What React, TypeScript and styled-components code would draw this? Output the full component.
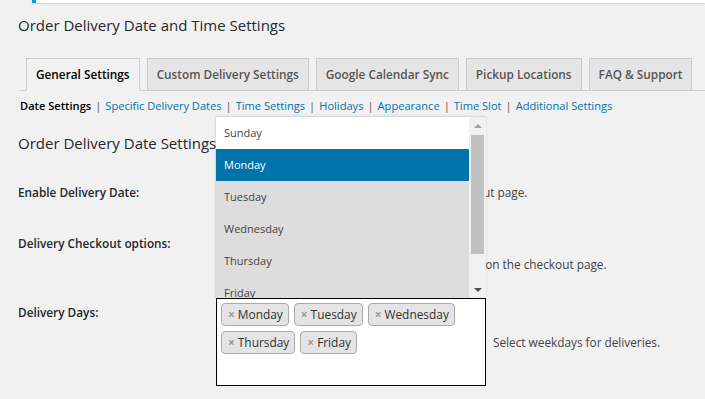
import React from 'react';
import styled, { createGlobalStyle } from 'styled-components';

const GlobalStyle = createGlobalStyle`
  html, body {
    margin: 0;
    padding: 0;
  }
  body {
    background: #f1f1f1;
    font-family: "Open Sans", "Liberation Sans", sans-serif;
    color: #23282d;
  }
  * {
    box-sizing: border-box;
  }
`;

const Page = styled.div`
  width: 705px;
  height: 399px;
  overflow: hidden;
  background: #f1f1f1;
`;

const Notice = styled.div`
  height: 3px;
  margin-left: 32px;
  background: #fff;
  border-left: 4px solid #00a0d2;
  box-shadow: 0 1px 2px rgba(0, 0, 0, 0.12);
`;

const Wrap = styled.div`
  padding-left: 18px;
`;

const Title = styled.h1`
  margin: 12px 0 0;
  font-size: 15px;
  font-weight: 400;
  line-height: 20px;
  color: #23282d;
`;

const TabBar = styled.nav`
  display: flex;
  gap: 7px;
  margin: 23px 0 0 2px;
  padding-left: 6px;
  border-bottom: 1px solid #ccc;
`;

const Tab = styled.a<{ $active?: boolean }>`
  display: block;
  height: 33px;
  margin-bottom: -1px;
  padding: 0 9px;
  line-height: 31px;
  border: 1px solid #ccc;
  border-bottom-color: ${({ $active }) => ($active ? '#f1f1f1' : '#ccc')};
  background: ${({ $active }) => ($active ? '#f1f1f1' : '#e5e5e5')};
  color: ${({ $active }) => ($active ? '#000' : '#555')};
  font-size: 11.8px;
  font-weight: 600;
  white-space: nowrap;
  text-decoration: none;
`;

const SubNav = styled.ul`
  display: flex;
  margin: 5px 0 0 2px;
  padding: 0;
  list-style: none;
  font-size: 11.1px;
  line-height: 20px;
  white-space: nowrap;
`;

const SubLink = styled.a<{ $current?: boolean }>`
  color: ${({ $current }) => ($current ? '#000' : '#0073aa')};
  font-weight: ${({ $current }) => ($current ? 600 : 400)};
  text-decoration: none;
`;

const Sep = styled.span`
  padding: 0 4px;
  color: #555;
`;

const Heading = styled.h2`
  margin: 17px 0 0;
  font-size: 15px;
  font-weight: 400;
  line-height: 20px;
  color: #23282d;
`;

const Row = styled.div<{ $gap: number }>`
  display: grid;
  grid-template-columns: 198px 1fr;
  margin-top: ${({ $gap }) => $gap}px;
`;

const Label = styled.div<{ $offset?: number }>`
  padding-top: ${({ $offset }) => $offset ?? 0}px;
  font-size: 11.8px;
  font-weight: 600;
  line-height: 18px;
  color: #23282d;
`;

const Field = styled.div`
  font-size: 11.8px;
  line-height: 18px;
  color: #444;
  white-space: nowrap;
`;

const CheckLine = styled.label`
  display: flex;
  align-items: center;
  gap: 12px;
`;

const Box = styled.span`
  width: 16px;
  height: 16px;
  border: 1px solid #b4b9be;
  background: #fff;
`;

const Radios = styled.div`
  display: flex;
  gap: 12px;
`;

const Description = styled.p`
  margin: 3px 0 0;
`;

const SelectRow = styled.div`
  display: flex;
  align-items: center;
  gap: 7px;
`;

const SelectBox = styled.div`
  position: relative;
  width: 270px;
  height: 88px;
  padding: 4px;
  display: flex;
  flex-wrap: wrap;
  align-content: flex-start;
  gap: 5px;
  background: #fff;
  border: 1px solid #000;
`;

const Chip = styled.span`
  height: 23px;
  padding: 0 5px 0 6px;
  line-height: 21px;
  font-size: 11.9px;
  color: #333;
  background: #e4e4e4;
  border: 1px solid #aaa;
  border-radius: 4px;
`;

const Remove = styled.span`
  margin-right: 3px;
  color: #999;
  font-weight: 700;
`;

const Dropdown = styled.div`
  position: absolute;
  left: -1px;
  bottom: calc(100% + 1px);
  width: 270px;
  height: 181px;
  display: flex;
  overflow: hidden;
  background: #fff;
  box-shadow: 0 -1px 2px rgba(0, 0, 0, 0.12), -1px 0 1px rgba(0, 0, 0, 0.06);
`;

const Options = styled.ul`
  flex: 1;
  margin: 0;
  padding: 0;
  list-style: none;
`;

const Option = styled.li<{ $state: 'plain' | 'picked' | 'hover' }>`
  height: 32px;
  padding-left: 8px;
  line-height: 32px;
  font-size: 11px;
  background: ${({ $state }) =>
    $state === 'hover' ? '#0073aa' : $state === 'picked' ? '#ddd' : '#fff'};
  color: ${({ $state }) => ($state === 'hover' ? '#fff' : '#444')};
`;

const Scrollbar = styled.div`
  width: 17px;
  display: flex;
  flex-direction: column;
  background: #f1f1f1;
`;

const Arrow = styled.div<{ $down?: boolean }>`
  height: 17px;
  display: flex;
  align-items: center;
  justify-content: center;

  &::before {
    content: '';
    border-left: 4px solid transparent;
    border-right: 4px solid transparent;
    ${({ $down }) =>
      $down ? 'border-top: 4px solid #505050;' : 'border-bottom: 4px solid #a3a3a3;'}
  }
`;

const Track = styled.div`
  flex: 1;
  padding: 1px 2px 0;
`;

const Thumb = styled.div`
  height: 119px;
  background: #c1c1c1;
`;

const days = ['Sunday', 'Monday', 'Tuesday', 'Wednesday', 'Thursday', 'Friday', 'Saturday'];
const picked = ['Monday', 'Tuesday', 'Wednesday', 'Thursday', 'Friday'];

const tabs = [
  'General Settings',
  'Custom Delivery Settings',
  'Google Calendar Sync',
  'Pickup Locations',
  'FAQ & Support',
];

const links = [
  'Date Settings',
  'Specific Delivery Dates',
  'Time Settings',
  'Holidays',
  'Appearance',
  'Time Slot',
  'Additional Settings',
];

export default function App() {
  return (
    <Page>
      <GlobalStyle />
      <Notice />
      <Wrap>
        <Title>Order Delivery Date and Time Settings</Title>

        <TabBar>
          {tabs.map((t, i) => (
            <Tab key={t} $active={i === 0}>
              {t}
            </Tab>
          ))}
        </TabBar>

        <SubNav>
          {links.map((l, i) => (
            <li key={l}>
              <SubLink $current={i === 0}>{l}</SubLink>
              {i < links.length - 1 && <Sep>|</Sep>}
            </li>
          ))}
        </SubNav>

        <Heading>Order Delivery Date Settings</Heading>

        <Row $gap={29.5}>
          <Label>Enable Delivery Date:</Label>
          <Field>
            <CheckLine>
              <Box />
              Enable Delivery Date capture on the checkout page.
            </CheckLine>
          </Field>
        </Row>

        <Row $gap={33.5}>
          <Label>Delivery Checkout options:</Label>
          <Field>
            <Radios>
              <span>Delivery Date</span>
              <span>Delivery Date &amp; Time</span>
            </Radios>
            <Description>
              Select what delivery options should be displayed on the checkout page.
            </Description>
          </Field>
        </Row>

        <Row $gap={25}>
          <Label $offset={4.5}>Delivery Days:</Label>
          <SelectRow>
            <SelectBox>
              <Dropdown>
                <Options>
                  {days.map((d) => (
                    <Option
                      key={d}
                      $state={d === 'Monday' ? 'hover' : picked.includes(d) ? 'picked' : 'plain'}
                    >
                      {d}
                    </Option>
                  ))}
                </Options>
                <Scrollbar>
                  <Arrow />
                  <Track>
                    <Thumb />
                  </Track>
                  <Arrow $down />
                </Scrollbar>
              </Dropdown>
              {picked.map((d) => (
                <Chip key={d}>
                  <Remove>×</Remove>
                  {d}
                </Chip>
              ))}
            </SelectBox>
            <Field>Select weekdays for deliveries.</Field>
          </SelectRow>
        </Row>
      </Wrap>
    </Page>
  );
}
